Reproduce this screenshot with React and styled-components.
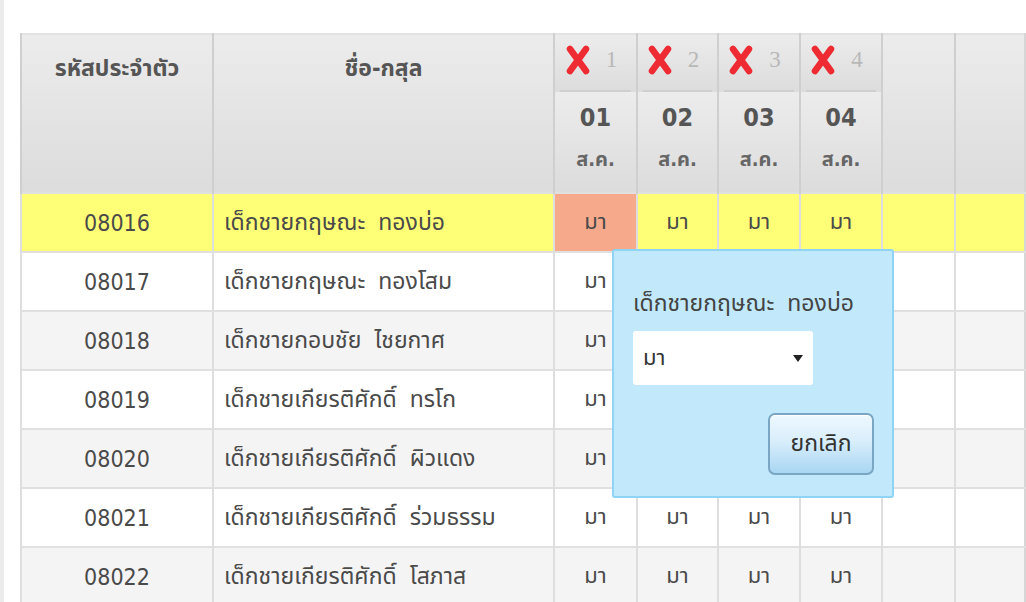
import React from "react";
import styled, { createGlobalStyle } from "styled-components";

const GlobalStyle = createGlobalStyle`
  html, body {
    margin: 0;
    padding: 0;
    background: #ffffff;
    overflow: hidden;
  }
  body {
    font-family: Tahoma, "DejaVu Sans Condensed", "DejaVu Sans", "Noto Sans Thai", sans-serif;
    color: #4d4d4d;
  }
`;

const Page = styled.div`
  position: relative;
  width: 1026px;
  height: 602px;
  box-sizing: border-box;
  border-left: 4px solid #ebebeb;
  padding: 33px 0 0 16px;
`;

const Grid = styled.table`
  border-collapse: collapse;
  table-layout: fixed;
  width: 1004px;
  border-top: 2px solid #e2e2e2;
  border-right: 2px solid #d6d6d6;
  font-size: 23px;
`;

const HeadCell = styled.th`
  background: linear-gradient(#ececec, #dcdcdc);
  border-left: 2px solid #cfcfcf;
  vertical-align: top;
  padding: ${(p) => p.$pad || "17px 0 0"};
  font-weight: bold;
  font-size: 23px;
  color: #555;
  text-align: center;
  height: ${(p) => p.$h || "auto"};
  white-space: nowrap;
`;

const MarkCell = styled(HeadCell)`
  padding: 10px 0 0;
  height: 47px;
  position: relative;
  &::after {
    content: "";
    position: absolute;
    left: 5px;
    right: 5px;
    bottom: 0;
    border-bottom: 2px solid #cfcfcf;
  }
`;

const Mark = styled.span`
  display: inline-flex;
  align-items: center;
  gap: 16px;
  margin-left: -8px;
`;

const MarkNum = styled.span`
  font-family: "Liberation Serif", serif;
  font-weight: normal;
  font-size: 23px;
  color: #b8b8b8;
`;

const DayNum = styled.div`
  font-size: 25px;
  line-height: 30px;
  color: #555;
  padding-top: 11px;
`;

const DayMonth = styled.div`
  font-size: 20px;
  line-height: 26px;
  margin-top: 13px;
  color: #666;
`;

const Row = styled.tr`
  background: ${(p) => (p.$active ? "#ffff77" : p.$odd ? "#f4f4f4" : "#ffffff")};
  border-top: 2px solid #e0e0e0;
`;

const Cell = styled.td`
  height: 57px;
  padding: 0;
  border-left: 2px solid #dedede;
  text-align: ${(p) => (p.$left ? "left" : "center")};
  padding-left: ${(p) => (p.$left ? "10px" : "0")};
  background: ${(p) => (p.$hot ? "#f7a98b" : "transparent")};
  white-space: pre;
  color: #4a4a4a;
  font-size: ${(p) => (p.$name ? "23px" : p.$small ? "22px" : "23px")};
`;

const Popup = styled.div`
  position: absolute;
  left: 608px;
  top: 249px;
  width: 282px;
  height: 249px;
  box-sizing: border-box;
  background: #c2e9fb;
  border: 2px solid #8fd4f4;
  border-radius: 3px;
  padding: 36px 14px 0 19px;
  display: flex;
  flex-direction: column;
`;

const PopupTitle = styled.div`
  font-size: 23px;
  color: #444;
  white-space: pre;
`;

const Select = styled.div`
  margin-top: 10px;
  width: 180px;
  height: 54px;
  box-sizing: border-box;
  background: #fff;
  border-radius: 3px;
  display: flex;
  align-items: center;
  justify-content: space-between;
  padding: 0 10px 0 10px;
  font-size: 22px;
  color: #333;
`;

const Caret = styled.span`
  width: 0;
  height: 0;
  border-left: 5px solid transparent;
  border-right: 5px solid transparent;
  border-top: 7px solid #222;
`;

const Actions = styled.div`
  display: flex;
  justify-content: flex-end;
  margin-top: 28px;
  padding-right: 4px;
`;

const CancelButton = styled.button`
  width: 106px;
  height: 62px;
  border: 2px solid #7aa6c4;
  border-radius: 7px;
  background: linear-gradient(#eef8ff 0%, #d9eefb 45%, #a9d6f3 100%);
  box-shadow: inset 0 1px 0 #ffffff;
  font-family: inherit;
  font-size: 23px;
  color: #333;
  padding: 0;
`;

const XIcon = () => (
  <svg width="24" height="30" viewBox="0 0 24 30">
    <path
      d="M4 4 L20 26 M20 4 L4 26"
      stroke="#ee2b33"
      strokeWidth="6.5"
      strokeLinecap="round"
      fill="none"
    />
  </svg>
);

const days = ["01", "02", "03", "04"];

const students = [
  ["08016", "เด็กชายกฤษณะ  ทองบ่อ"],
  ["08017", "เด็กชายกฤษณะ  ทองโสม"],
  ["08018", "เด็กชายกอบชัย  ไชยกาศ"],
  ["08019", "เด็กชายเกียรติศักดิ์  ทรโก"],
  ["08020", "เด็กชายเกียรติศักดิ์  ผิวแดง"],
  ["08021", "เด็กชายเกียรติศักดิ์  ร่วมธรรม"],
  ["08022", "เด็กชายเกียรติศักดิ์  โสภาส"],
];

export default function App() {
  return (
    <>
      <GlobalStyle />
      <Page>
        <Grid>
          <colgroup>
            <col style={{ width: 192 }} />
            <col style={{ width: 341 }} />
            <col style={{ width: 83 }} />
            <col style={{ width: 81 }} />
            <col style={{ width: 82 }} />
            <col style={{ width: 82 }} />
            <col style={{ width: 73 }} />
            <col style={{ width: 70 }} />
          </colgroup>
          <thead>
            <tr>
              <HeadCell rowSpan={2}>รหัสประจำตัว</HeadCell>
              <HeadCell rowSpan={2}>ชื่อ-กสุล</HeadCell>
              {days.map((d, i) => (
                <MarkCell key={d}>
                  <Mark>
                    <XIcon />
                    <MarkNum>{i + 1}</MarkNum>
                  </Mark>
                </MarkCell>
              ))}
              <HeadCell rowSpan={2} />
              <HeadCell rowSpan={2} />
            </tr>
            <tr>
              {days.map((d) => (
                <HeadCell key={d} $pad="0" $h="100px">
                  <DayNum>{d}</DayNum>
                  <DayMonth>ส.ค.</DayMonth>
                </HeadCell>
              ))}
            </tr>
          </thead>
          <tbody>
            {students.map(([id, name], r) => (
              <Row key={id} $active={r === 0} $odd={r % 2 === 0}>
                <Cell>{id}</Cell>
                <Cell $left $name>{name}</Cell>
                {days.map((d, i) => (
                  <Cell key={d} $small $hot={r === 0 && i === 0}>
                    มา
                  </Cell>
                ))}
                <Cell />
                <Cell />
              </Row>
            ))}
          </tbody>
        </Grid>
        <Popup>
          <PopupTitle>เด็กชายกฤษณะ  ทองบ่อ</PopupTitle>
          <Select>
            <span>มา</span>
            <Caret />
          </Select>
          <Actions>
            <CancelButton>ยกเลิก</CancelButton>
          </Actions>
        </Popup>
      </Page>
    </>
  );
}
